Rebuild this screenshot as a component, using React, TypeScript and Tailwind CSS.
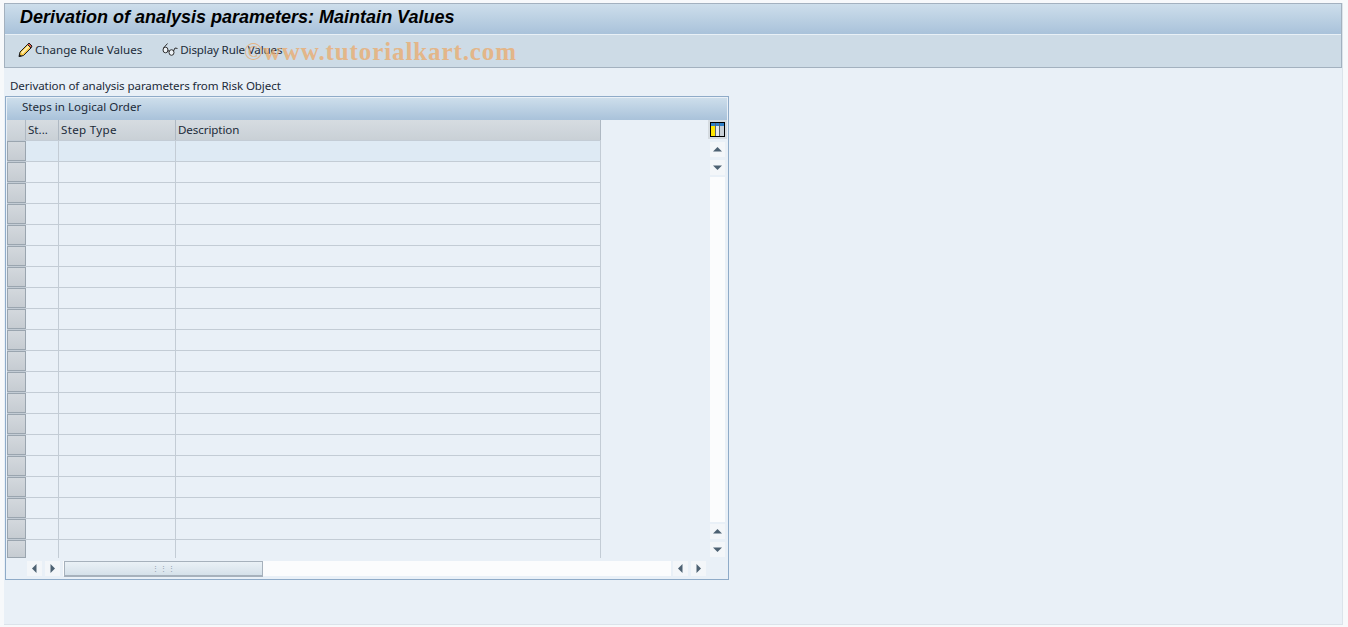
const rows = Array.from({ length: 20 }, (_, i) => i);

function PencilIcon() {
  return (
    <svg width="16" height="16" viewBox="0 0 16 16" className="shrink-0">
      <path d="M2 14.500l1-4.500 7.500-7.500 3.500 3.500-7.500 7.500z" fill="#f6c544" stroke="#1b1b1b" strokeWidth="1" strokeLinejoin="round" />
      <path d="M4 10.500l7-7 1.500 1.500-7 7z" fill="#fdf0b0" />
      <path d="M10.500 2.500l1.500-1.500 3 3-1 2z" fill="#e0604c" stroke="#1b1b1b" strokeWidth="1" strokeLinejoin="round" />
      <path d="M1.800 15l.7-3 2.300 2.300z" fill="#1b1b1b" />
    </svg>
  );
}

function GlassesIcon() {
  return (
    <svg width="16" height="14" viewBox="0 0 16 14" className="shrink-0" fill="none" stroke="#2e2e2e" strokeWidth="1">
      <ellipse cx="3.500" cy="7" rx="2.500" ry="2.800" fill="#eef3f7" />
      <ellipse cx="9.500" cy="9.500" rx="2.500" ry="2.800" fill="#eef3f7" />
      <path d="M5.800 7.500l1.500 .8M1.500 5l4-4.500M11.500 8l1.500-3 2.500 .5" />
    </svg>
  );
}

function ColumnsIcon() {
  return (
    <svg width="15" height="15" viewBox="0 0 15 15">
      <rect x="0.500" y="0.500" width="14" height="14" fill="#fff" stroke="#000" />
      <rect x="1" y="1" width="13" height="3" fill="#2f7fc8" />
      <rect x="1" y="4" width="4" height="10" fill="#ffe600" />
      <rect x="6" y="4" width="3" height="10" fill="#e4e8ec" />
      <rect x="10" y="4" width="4" height="10" fill="#c9d0d6" />
      <path d="M5.500 1v13M9.500 1v13" stroke="#5a6470" />
    </svg>
  );
}

function Arrow({ dir }: { dir: "up" | "down" | "left" | "right" }) {
  const d = {
    up: "M1 7.500l4.500-4.500L10 7.500z",
    down: "M1 3.500h9L5.500 8z",
    left: "M7.500 1v9L3 5.500z",
    right: "M3.500 1v9L8 5.500z",
  }[dir];
  return (
    <div className="flex h-[15px] w-[15px] shrink-0 items-center justify-center bg-[#f3f6f9]">
      <svg width="11" height="11" viewBox="0 0 11 11">
        <path d={d} fill="#4d6172" />
      </svg>
    </div>
  );
}

export default function App() {
  return (
    <div
      className="relative h-[627px] w-[1348px] overflow-hidden bg-[#f7f9fb] pb-[2px] pl-1 pr-[5px] pt-[3px] text-[11.6px] leading-4 text-[#1c2b39]"
      style={{ fontFamily: '"Noto Sans", sans-serif' }}
    >
      <div className="flex h-full flex-col border-b border-r border-[#dbe3ea] bg-[#e9f0f7]">
        <div className="border border-b-0 border-[#a3b1bf]">
          <div className="flex h-[31px] items-center border-b border-[#e8f0f6] bg-gradient-to-b from-[#cddeeb] to-[#a9c2da] pb-[5px] pl-[15px]">
            <h1
              className="text-[18px] font-bold italic text-black"
              style={{ fontFamily: '"Liberation Sans", sans-serif' }}
            >
              Derivation of analysis parameters: Maintain Values
            </h1>
          </div>
          <div className="flex h-[33px] items-center gap-[20px] border-b border-[#a3b1bf] bg-[#cddbe6] pb-[2px] pl-[12px]">
            <div className="flex items-center gap-[2px]">
              <PencilIcon />
              <span>Change Rule Values</span>
            </div>
            <div className="flex items-center gap-[2px]">
              <GlassesIcon />
              <span className="tracking-[-0.15px]">Display Rule Values</span>
            </div>
          </div>
        </div>

        <div className="flex h-[28px] items-end pb-[2px] pl-[6px] tracking-[-0.1px]">
          Derivation of analysis parameters from Risk Object
        </div>

        <div className="ml-[1px] flex h-[484px] w-[724px] flex-col border border-[#8fabc8] p-[1px]">
          <div className="flex h-[22px] shrink-0 items-center bg-gradient-to-b from-[#cddeeb] to-[#a9c2da] pb-[5px] pl-[15px]">
            Steps in Logical Order
          </div>

          <div className="flex h-[438px] shrink-0">
            <div className="w-[594px] shrink-0">
              <div className="flex h-[21px] border-b border-[#c3ccd5] bg-gradient-to-b from-[#d6dce1] to-[#c9d0d6]">
                <div className="w-[19px] shrink-0 border-r border-[#aeb8c2]" />
                <div className="flex w-[33px] shrink-0 items-center border-r border-[#aeb8c2] pl-[2px]">St...</div>
                <div className="flex w-[117px] shrink-0 items-center border-r border-[#aeb8c2] pl-[2px] tracking-[0.3px]">Step Type</div>
                <div className="flex flex-1 items-center border-r border-[#aeb8c2] pl-[2px] tracking-[-0.1px]">Description</div>
              </div>
              {rows.map((r) => (
                <div
                  key={r}
                  className={`flex ${r < 19 ? "h-[21px] border-b border-[#c3ccd5]" : "h-[18px]"} ${r === 0 ? "bg-[#deeaf4]" : ""}`}
                >
                  <div className="w-[19px] shrink-0 border border-[#9aa5af] bg-gradient-to-b from-[#d3d8dd] to-[#c6ccd2]" />
                  <div className="w-[33px] shrink-0 border-r border-[#c3ccd5]" />
                  <div className="w-[117px] shrink-0 border-r border-[#c3ccd5]" />
                  <div className="flex-1 border-r border-[#c3ccd5]" />
                </div>
              ))}
            </div>

            <div className="flex-1" />

            <div className="flex w-[19px] flex-col items-center gap-[3px] pb-[1px]">
              <div className="flex h-[19px] w-[19px] shrink-0 items-center justify-center bg-[#d5dbe0]">
                <ColumnsIcon />
              </div>
              <Arrow dir="up" />
              <Arrow dir="down" />
              <div className="my-[-1px] w-[15px] flex-1 bg-[#fbfcfd]" />
              <Arrow dir="up" />
              <Arrow dir="down" />
            </div>
          </div>

          <div className="flex h-[20px] shrink-0 items-start gap-[3px] pl-[20px] pt-[3px]">
            <Arrow dir="left" />
            <Arrow dir="right" />
            <div className="mr-[-1px] flex h-[15px] w-[608px] bg-[#fbfcfd] pl-[1px]">
              <div className="flex h-[16px] w-[199px] items-center justify-center border border-b-2 border-[#a6b1bc] bg-gradient-to-b from-[#eaf1f6] to-[#d5e1ea] text-[7px] leading-none tracking-[1px] text-[#8a98a6]">
                ⋮⋮⋮
              </div>
            </div>
            <Arrow dir="left" />
            <Arrow dir="right" />
          </div>
        </div>
      </div>

      <div
        className="absolute left-[244px] top-[44px] flex items-center text-[25px] font-bold tracking-[0.9px] text-[#e9ad72] opacity-80"
        style={{ fontFamily: '"Liberation Serif", serif' }}
      >
        <span className="mr-[-1px] text-[25px] font-normal">©</span>
        <span>www.tutorialkart.com</span>
      </div>
    </div>
  );
}
